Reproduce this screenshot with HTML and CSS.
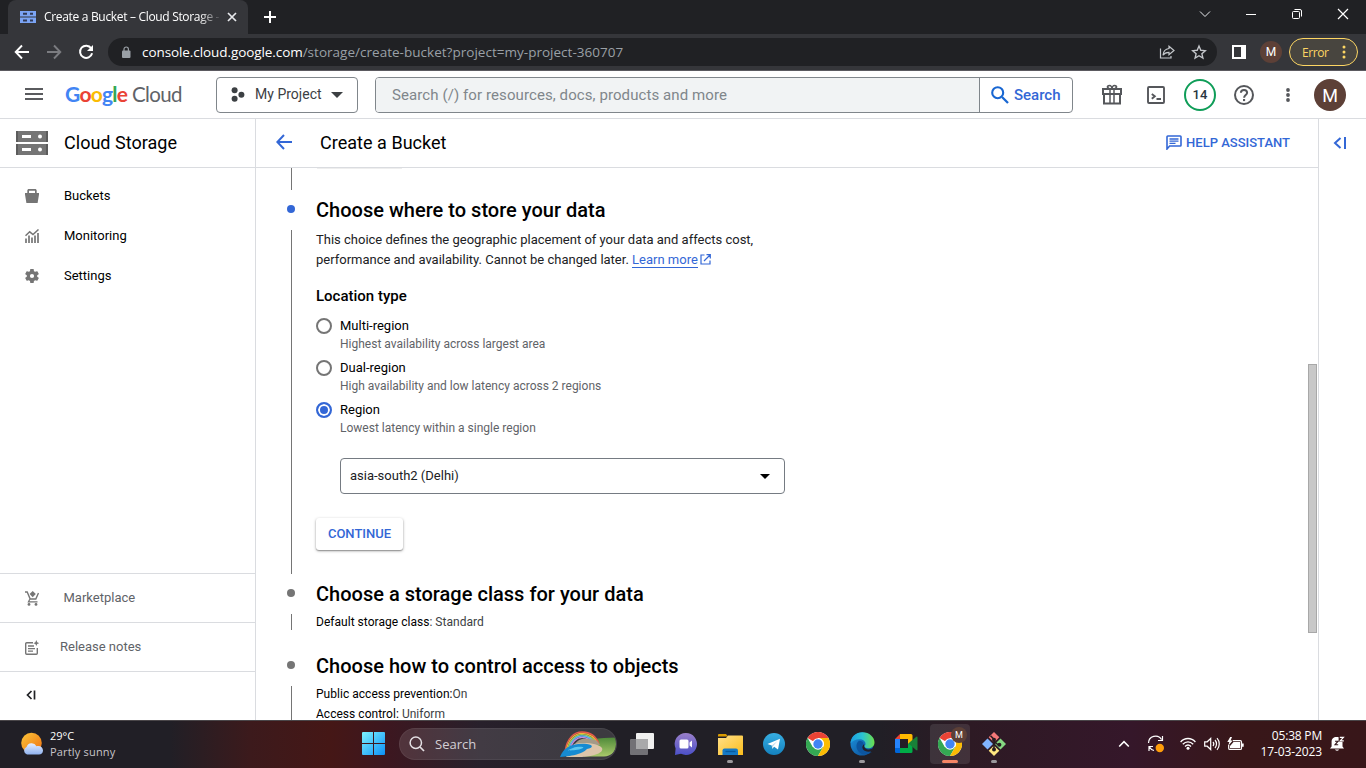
FILE: index.html
```html
<!DOCTYPE html>
<html lang="en">
<head>
<meta charset="utf-8">
<title>Create a Bucket – Cloud Storage</title>
<link rel="stylesheet" href="styles.css">
</head>
<body>
<svg class="defs" width="0" height="0" aria-hidden="true">
  <defs>
    <linearGradient id="win" x1="0" y1="0" x2="1" y2="1"><stop offset="0" stop-color="#7df3ff"/><stop offset="1" stop-color="#0c8ff5"/></linearGradient>
    <linearGradient id="sun" x1="0" y1="0" x2="1" y2="1"><stop offset="0" stop-color="#fcc63a"/><stop offset="1" stop-color="#ee6f10"/></linearGradient>
    <linearGradient id="cloud" x1="0" y1="0" x2="0" y2="1"><stop offset="0" stop-color="#e4edff"/><stop offset="1" stop-color="#8fb2f0"/></linearGradient>
    <linearGradient id="chat" x1="0" y1="0" x2="0" y2="1"><stop offset="0" stop-color="#9a7fc9"/><stop offset="1" stop-color="#4b50c8"/></linearGradient>
    <linearGradient id="folder" x1="0" y1="0" x2="1" y2="1"><stop offset="0" stop-color="#ffe08a"/><stop offset="1" stop-color="#fbbd1c"/></linearGradient>
    <linearGradient id="tele" x1="0" y1="0" x2="0" y2="1"><stop offset="0" stop-color="#37aee2"/><stop offset="1" stop-color="#1481be"/></linearGradient>
    <linearGradient id="edge" x1="0" y1="0" x2="1" y2="0"><stop offset="0" stop-color="#1b9de2"/><stop offset=".5" stop-color="#2bc3d2"/><stop offset="1" stop-color="#6be04b"/></linearGradient>
    <linearGradient id="edge2" x1="0" y1="0" x2="1" y2="1"><stop offset="0" stop-color="#1c93dd"/><stop offset="1" stop-color="#0b4a94"/></linearGradient>
    <linearGradient id="hill" x1="0" y1="0" x2="0" y2="1"><stop offset="0" stop-color="#4f8a3a"/><stop offset="1" stop-color="#a9c96a"/></linearGradient>
    <symbol id="chrome" viewBox="0 0 24 24">
      <circle cx="12" cy="12" r="12" fill="#fff"/>
      <path d="M12 12 1.600 6A12 12 0 0 1 22.400 6H12z" fill="#ea4335"/>
      <path d="M1.600 6A12 12 0 0 0 12 24l5.200-9L12 12l-5.200 3z" fill="#34a853"/>
      <path d="M22.400 6A12 12 0 0 1 12 24l5.200-9A6 6 0 0 0 12 6z" fill="#fbbc04"/>
      <circle cx="12" cy="12" r="5.800" fill="#fff"/><circle cx="12" cy="12" r="4.700" fill="#4285f4"/>
    </symbol>
  </defs>
</svg>

<div class="tabstrip">
  <div class="tab">
    <svg width="16" height="14" viewBox="0 0 16 14"><path fill="#7ba4f4" d="M0 1h16v5.400H0zM0 7.600h16V13H0z"/><path fill="#303a56" d="M3 2.800h4v2H3zM10 2.800h3v2h-3zM3 9.400h4v2H3zM10 9.400h3v2h-3z"/></svg>
    <span class="tab-title">Create a Bucket – Cloud Storage -</span>
    <svg class="tab-close" width="10" height="10" viewBox="0 0 10 10"><path d="M1 1l8 8M9 1L1 9" stroke="#e8eaed" stroke-width="1.700"/></svg>
  </div>
  <svg class="tab-plus" width="12" height="12" viewBox="0 0 12 12"><path d="M6 0v12M0 6h12" stroke="#fff" stroke-width="2"/></svg>
  <div class="win-controls">
    <span><svg width="12" height="12" viewBox="0 0 12 12"><path d="M1 3.500l5 5 5-5" stroke="#e8eaed" fill="none"/></svg></span>
    <span><svg width="10" height="12" viewBox="0 0 10 12"><path d="M0 6.500h10" stroke="#fff"/></svg></span>
    <span><svg width="10" height="10" viewBox="0 0 10 10"><path d="M2.500.5H8A1.500 1.500 0 0 1 9.500 2v5.500" stroke="#fff" fill="none"/><rect x=".5" y="2.500" width="7" height="7" rx="1" stroke="#fff" fill="none"/></svg></span>
    <span><svg width="12" height="12" viewBox="0 0 12 12"><path d="M1 1l10 10M11 1L1 11" stroke="#fff" stroke-width="1.200"/></svg></span>
  </div>
</div>

<div class="toolbar">
  <div class="nav-btns">
    <span><svg width="16" height="16" viewBox="0 0 16 16"><path d="M15 8H2M8 1.500L1.700 8 8 14.500" stroke="#fff" stroke-width="1.900" fill="none"/></svg></span>
    <span><svg width="16" height="16" viewBox="0 0 16 16"><path d="M1 8h13M8 1.500L14.300 8 8 14.500" stroke="#7b7c80" stroke-width="1.900" fill="none"/></svg></span>
    <span><svg width="16" height="16" viewBox="0 0 16 16"><path d="M13.200 4.300A6.100 6.100 0 1 0 14.100 9.200" stroke="#fff" stroke-width="2" fill="none"/><path d="M15 1v6H9z" fill="#fff"/></svg></span>
  </div>
  <div class="omnibox">
    <svg class="lock" width="10" height="12" viewBox="0 0 10 12"><rect x="1" y="4.500" width="8.500" height="7.500" rx="1" fill="#9aa0a6"/><path d="M3 5V3.200a2.200 2.200 0 0 1 4.400 0V5" stroke="#9aa0a6" stroke-width="1.200" fill="none"/></svg>
    <span class="url"><b>console.cloud.google.com</b>/storage/create-bucket?project=my-project-360707</span>
    <svg class="share" width="16" height="16" viewBox="0 0 16 16"><path d="M1.500 4.500v9.500H12v-2" stroke="#c4c7cb" stroke-width="1.200" fill="none"/><path d="M10 2.200l5 4.300-5 4.300V8.400C7 8.400 5.200 9.300 4 11.200 4.300 7.500 6.200 5 10 4.500z" stroke="#c4c7cb" stroke-width="1.200" fill="none"/></svg>
    <svg width="16" height="16" viewBox="0 0 24 24"><path d="M12 3l2.700 6.400 6.800.6-5.200 4.500 1.600 6.700L12 17.600l-5.900 3.600 1.600-6.700L2.500 10l6.800-.6z" stroke="#c4c7cb" stroke-width="2" fill="none"/></svg>
  </div>
  <svg class="sidepanel" width="14" height="14" viewBox="0 0 14 14"><path fill="#fff" fill-rule="evenodd" d="M0 0h14v14H0zM2 2v10h7V2z"/></svg>
  <span class="profile">M</span>
  <div class="error"><span>Error</span><svg width="4" height="14" viewBox="0 0 4 14"><g fill="#fdd663"><circle cx="2" cy="2" r="1.500"/><circle cx="2" cy="7" r="1.500"/><circle cx="2" cy="12" r="1.500"/></g></svg></div>
</div>

<header class="gheader">
  <svg class="burger" width="18" height="12" viewBox="0 0 18 12"><path d="M0 1h18M0 6h18M0 11h18" stroke="#5a5b5e" stroke-width="2"/></svg>
  <div class="logo"><span class="google"><i class="c-b">G</i><i class="c-r">o</i><i class="c-y">o</i><i class="c-b">g</i><i class="c-g">l</i><i class="c-r">e</i></span><span class="cloud">Cloud</span></div>
  <div class="project">
    <svg width="14" height="16" viewBox="0 0 14 16"><g fill="#3c4043"><circle cx="3.600" cy="3.200" r="3"/><circle cx="10.400" cy="7.800" r="3"/><circle cx="3.600" cy="11.800" r="3"/></g></svg>
    <span>My Project</span>
    <svg class="caret" width="12" height="6" viewBox="0 0 12 6"><path d="M0 0h12L6 6z" fill="#3c4043"/></svg>
  </div>
  <div class="search">
    <span class="placeholder">Search (/) for resources, docs, products and more</span>
    <div class="search-btn"><svg width="18" height="18" viewBox="0 0 18 18"><circle cx="6.700" cy="6.700" r="5.500" stroke="#1967d2" stroke-width="2.100" fill="none"/><path d="M11 11l6 6" stroke="#1967d2" stroke-width="2.300"/></svg><span>Search</span></div>
  </div>
  <div class="tools">
    <span><svg width="22" height="24" viewBox="0 0 22 24"><g stroke="#55575b" stroke-width="2" fill="none"><path d="M2 6h18v5H2zM3 11h16v9.500H3z"/><path d="M9 6v14.500M13 6v14.500" stroke-width="1.500"/><path d="M11 6C5.500 6 5.500 2.500 8.500 2.500 10 2.500 11 4.500 11 5.500c0-1 1-3 2.500-3 3 0 3 3.500-2.500 3.500z" stroke-width="1.700"/></g></svg></span>
    <span><svg width="18" height="18" viewBox="0 0 18 18"><rect x="1" y="1" width="16" height="16" rx="1" stroke="#55575b" stroke-width="1.900" fill="none"/><path d="M4.800 8l3 2.300-3 2.500M9.500 13h4.500" stroke="#55575b" stroke-width="1.900" fill="none"/></svg></span>
    <span><b class="count">14</b></span>
    <span><svg width="20" height="20" viewBox="0 0 20 20"><circle cx="10" cy="10" r="9" stroke="#55575b" stroke-width="2" fill="none"/><path d="M6.900 7.800C6.900 6 8.200 4.900 10 4.900s3.100 1.200 3.100 2.800c0 2.300-3 2.500-3 5.100" stroke="#55575b" stroke-width="2" fill="none"/><rect x="9" y="14" width="2.100" height="2.100" fill="#55575b"/></svg></span>
    <span><svg width="4" height="14" viewBox="0 0 4 14"><g fill="#55575b"><circle cx="2" cy="2" r="1.900"/><circle cx="2" cy="7" r="1.900"/><circle cx="2" cy="12" r="1.900"/></g></svg></span>
  </div>
  <span class="avatar">M</span>
</header>

<div class="app">
  <nav class="sidebar">
    <div class="side-head">
      <svg width="32" height="24" viewBox="0 0 32 24"><path fill="#757575" d="M0 0h32v11H0zM0 13h32v11H0z"/><path fill="#5c5c5c" d="M0 0h2v11H0zM30 0h2v11h-2zM0 13h2v11H0zM30 13h2v11h-2z"/><path fill="#fff" d="M6 4h9v3H6zM6 17h9v3H6z"/><circle cx="24" cy="5.500" r="2" fill="#fff"/><circle cx="24" cy="18.500" r="2" fill="#fff"/></svg>
      <span>Cloud Storage</span>
    </div>
    <ul class="side-list">
      <li><svg width="14" height="14" viewBox="0 0 14 14"><path fill="#757575" fill-rule="evenodd" d="M0 4h2.300V1.800C2.300.6 3 0 4 0h6c1 0 1.700.6 1.700 1.800V4H14v1.600L12.600 14H1.400L0 5.600zM4 4h6V1.700H4z"/></svg><span>Buckets</span></li>
      <li><svg width="14" height="14" viewBox="0 0 14 14"><path d="M.5 6.800L4.700 2.800 8 5.500 13.500.5" stroke="#757575" stroke-width="1.500" fill="none"/><path d="M1 14V9.500M4 14V6.500M7 14V8.500M10 14V6.500M13 14V4" stroke="#757575" stroke-width="1.700"/></svg><span>Monitoring</span></li>
      <li><svg width="14" height="14" viewBox="2 2 20 20"><path fill="#757575" d="M19.400 13a7.500 7.500 0 0 0 0-2l2.100-1.600c.2-.1.200-.4.100-.6l-2-3.500c-.1-.2-.4-.3-.6-.2l-2.500 1a7 7 0 0 0-1.700-1l-.4-2.600c0-.3-.2-.5-.5-.5h-4c-.2 0-.4.200-.4.500l-.4 2.600a7 7 0 0 0-1.700 1L5 5.100c-.2-.1-.5 0-.6.200l-2 3.500c-.1.200-.1.500.1.600L4.600 11a7.500 7.500 0 0 0 0 2l-2.100 1.600c-.2.100-.2.400-.1.600l2 3.500c.1.200.4.300.6.200l2.400-1a7 7 0 0 0 1.700 1l.4 2.600c0 .3.200.5.400.5h4c.3 0 .5-.2.500-.5l.4-2.600a7 7 0 0 0 1.700-1l2.500 1c.2.100.5 0 .6-.2l2-3.500c.1-.2.100-.5-.1-.6zM12 15a3 3 0 1 1 0-6 3 3 0 0 1 0 6z"/></svg><span>Settings</span></li>
    </ul>
    <div class="side-foot">
      <div class="foot-row market"><svg width="14" height="15" viewBox="0 0 14 15"><path d="M0 1h2.200l3 7h5.600L13.500 2" stroke="#757575" stroke-width="1.400" fill="none"/><path d="M4.800 8.300L3.500 10.800H12.500" stroke="#757575" stroke-width="1.300" fill="none"/><path d="M7.700 0l3.100 3.100-3.100 3.100-3.100-3.100z" fill="#757575"/><circle cx="4" cy="13.400" r="1.400" fill="#757575"/><circle cx="11" cy="13.400" r="1.400" fill="#757575"/></svg><span>Marketplace</span></div>
      <div class="foot-row notes"><svg width="14" height="15" viewBox="0 0 14 15"><path d="M8 2.700H1.700a1 1 0 0 0-1 1v9.600a1 1 0 0 0 1 1h9.600a1 1 0 0 0 1-1V8" stroke="#757575" stroke-width="1.400" fill="none"/><path d="M3 6h6M3 8.600h7M3 11.200h5" stroke="#757575" stroke-width="1.300"/><path d="M11.300 0l.9 2.300 2 .9-2 .9-.9 2-.9-2-2-.9 2-.9z" fill="#757575"/></svg><span>Release notes</span></div>
      <div class="foot-row"><svg class="fold" width="10" height="10" viewBox="0 0 10 10"><path d="M5.500 1L1.500 5l4 4M8.500.5v9" stroke="#202124" stroke-width="1.700" fill="none"/></svg></div>
    </div>
  </nav>

  <main class="main">
    <div class="main-head">
      <svg width="16" height="16" viewBox="0 0 16 16"><path d="M16 8H1.800M8 1L1.300 8 8 15" stroke="#3367d6" stroke-width="2" fill="none"/></svg>
      <h1>Create a Bucket</h1>
      <div class="help"><svg width="16" height="15" viewBox="0 0 16 15"><path d="M1 14V1.800Q1 1 1.800 1H14.200Q15 1 15 1.800V10.200Q15 11 14.200 11H3.600z" stroke="#3367d6" stroke-width="1.600" fill="none"/><path d="M3.500 4h9M3.500 6.200h9M3.500 8.400h6" stroke="#3367d6" stroke-width="1.300"/></svg><span>HELP ASSISTANT</span></div>
    </div>
    <div class="content">
      <div class="steps">
        <div class="prev"><div class="rail-line"></div><div class="prev-shadow"></div></div>

        <section class="step first">
          <div class="rail"><div class="dot-box"><i class="dot active"></i></div><div class="rail-line"></div></div>
          <div class="body">
            <h2>Choose where to store your data</h2>
            <p class="desc"><span class="l1">This choice defines the geographic placement of your data and affects cost,</span><br><span class="l2">performance and availability. Cannot be changed later. <a>Learn more</a></span><svg class="ext" width="11" height="11" viewBox="0 0 11 11"><path d="M4.500 1H1v9h9V6.500M6.500.700h3.800v3.800M10 1L4 7" stroke="#3367d6" stroke-width="1.200" fill="none"/></svg></p>
            <h3>Location type</h3>
            <div class="option"><i class="radio"></i><div><b>Multi-region</b><small>Highest availability across largest area</small></div></div>
            <div class="option"><i class="radio"></i><div><b>Dual-region</b><small>High availability and low latency across 2 regions</small></div></div>
            <div class="option"><i class="radio on"></i><div><b>Region</b><small>Lowest latency within a single region</small></div></div>
            <div class="select"><span>asia-south2 (Delhi)</span><svg width="10" height="5" viewBox="0 0 10 5"><path d="M0 0h10L5 5z" fill="#000"/></svg></div>
            <button class="continue">CONTINUE</button>
          </div>
        </section>

        <section class="step second">
          <div class="rail"><div class="dot-box"><i class="dot"></i></div><div class="rail-line"></div></div>
          <div class="body">
            <h2>Choose a storage class for your data</h2>
            <div class="fact"><b>Default storage class</b>: Standard</div>
          </div>
        </section>

        <section class="step third">
          <div class="rail"><div class="dot-box"><i class="dot"></i></div><div class="rail-line"></div></div>
          <div class="body">
            <h2>Choose how to control access to objects</h2>
            <div class="fact tall"><b>Public access prevention:</b>On</div>
            <div class="fact tall"><b>Access control:</b> Uniform</div>
          </div>
        </section>
      </div>
      <div class="scroll"><div class="thumb"></div></div>
    </div>
  </main>
  <aside class="panel"><svg width="14" height="12" viewBox="0 0 14 12"><path d="M7.500 1L2 6l5.500 5M12 0v12" stroke="#3367d6" stroke-width="2" fill="none"/></svg></aside>
</div>

<footer class="taskbar">
  <div class="weather">
    <svg width="23" height="24" viewBox="0 0 23 24"><circle cx="10.500" cy="11" r="10.300" fill="url(#sun)"/><path d="M6 22.500a4 4 0 0 1-.5-7.500 5.500 5.500 0 0 1 10-.8c3.500-1 6.500 1 6.500 4.300 0 2.500-1.800 4-4 4z" fill="url(#cloud)"/></svg>
    <div><span class="temp">29°C</span><span class="cond">Partly sunny</span></div>
  </div>
  <div class="start"><svg width="23" height="23" viewBox="0 0 23 23"><path fill="url(#win)" d="M1 0H11V11H0V1Q0 0 1 0ZM12 0H22Q23 0 23 1V11H12ZM0 12H11V23H1Q0 23 0 22ZM12 12H23V22Q23 23 22 23H12Z"/></svg></div>
  <div class="tb-search">
    <svg width="16" height="16" viewBox="0 0 16 16"><circle cx="6.800" cy="6.800" r="5.700" stroke="#e4e0e4" stroke-width="1.500" fill="none"/><path d="M11 11l4 4" stroke="#e4e0e4" stroke-width="1.700"/></svg>
    <span>Search</span>
    <svg class="scene" width="57" height="27" viewBox="0 0 57 27"><path d="M28 7.500c10 .5 18-1 28-1v7c0 7-5 12-12 12H24z" fill="url(#hill)"/><g fill="none" stroke-width="1.300"><path d="M5 20C7 7 14 1 22 1s14 4 17 12" stroke="#e8574c"/><path d="M6.200 20C8 8 15 2.300 22 2.300s13 4 16 11" stroke="#f5b13a"/><path d="M7.500 20C9 9 16 3.600 22 3.600s12 4 15 10" stroke="#9bd35a"/><path d="M8.800 20C10 10 16 5 22 5s11 4 14 9" stroke="#5cb4f0"/><path d="M10 20C11 11 17 6.300 22 6.300s10 4 13 8" stroke="#c58be0"/></g><path d="M15 13c3-5 8-6 14-5 6 0 9 2 11 6z" fill="#a39a88"/><path d="M14 13c10-2 24-1 28 4 2 5-8 8-20 9H6z" fill="#dcc5aa"/><path d="M0 26C4 16 12 12 27 13c7 1 6 4 0 5-3 3-6 4-9 5-6 2-10 2-18 3z" fill="#168bd2"/><path d="M13 17c5-2 12-1 10 0-3 2-14 3-15 2z" fill="#5cc7ef"/></svg>
  </div>
  <div class="apps">
    <span><svg width="24" height="22" viewBox="0 0 24 22"><rect x="6" y="0" width="18" height="16" rx="1" fill="#f0f0f0"/><rect x="0" y="6" width="18" height="16" rx="1" fill="#727176"/><path d="M6 6h12v10H6z" fill="#a9a9ab"/></svg></span>
    <span><svg width="24" height="24" viewBox="0 0 24 24"><path d="M12 1a11 11 0 1 1-5 20.800L1 23l.6-6.500A11 11 0 0 1 12 1z" fill="url(#chat)"/><rect x="5.500" y="7.500" width="9" height="9" rx="1.500" fill="#fff"/><path d="M15.500 10.500l2.500-2v7l-2.500-2z" fill="#fff"/></svg></span>
    <span class="running"><svg width="25" height="24" viewBox="0 0 25 24"><path d="M0 3a1 1 0 0 1 1-1h7l2 2.500H0z" fill="#d99a00"/><path d="M0 6h8l2-2.500h14a1 1 0 0 1 1 1V23H0z" fill="url(#folder)"/><path d="M4.500 23v-4.500a2 2 0 0 1 2-2H18a2 2 0 0 1 2 2V23z" fill="#1579c5"/><path d="M7.500 19.500h10" stroke="#075a9e" stroke-width="1.300"/></svg></span>
    <span><svg width="22" height="22" viewBox="0 0 22 22"><circle cx="11" cy="11" r="11" fill="url(#tele)"/><path d="M4.500 11L17 5.800 15 16.500l-3.800-2.800-2 2-.4-3.300z" fill="#fff"/><path d="M8.800 12.400L14.500 8l-4.300 5-.9 2.700z" fill="#b9d9ec"/></svg></span>
    <span><svg width="24" height="24"><use href="#chrome"/></svg></span>
    <span class="running"><svg width="25" height="24" viewBox="0 0 25 24"><circle cx="12" cy="12" r="11.500" fill="url(#edge2)"/><path d="M.5 11.500C1 4.500 6 .3 12.500.3c7 0 12 5 12 10 0 4-3 6-6.500 6-2 0-3.500-.7-3.500-1.700 0-.6 1-1.200 1-2.800 0-2.500-2.700-4.500-6-4.500-4 0-7.500 1.800-9 4.200z" fill="url(#edge)"/><path d="M9 8.800C6 11 5.500 16 8.500 19.500c3 3.500 9 4 13.500.5-4 1.500-8 0-9.500-3-1.200-2.500-.2-4 1-5.200 0-2-2-3-4.500-3z" fill="#0c559f"/><path d="M14.400 12c-1.200 2.300.6 5 3.600 5.400 2.500.3 4.500-.7 6-1.800l-1.400 3.200c-4 1.800-8.100 1-9.900-1.800-1-2.200-.1-4.200 1.700-5z" fill="#22202a"/></svg></span>
    <span><svg width="23" height="19" viewBox="0 0 23 19"><path d="M0 5h5v9H0z" fill="#2684fc"/><path d="M0 14h5v5H1.500Q0 19 0 17.500z" fill="#0066da"/><path d="M0 5l5-5v5z" fill="#ea4335"/><path d="M5 0h11q1.500 0 1.500 1.500V9L13 10V5H5z" fill="#ffba00"/><path d="M5 19v-5h8V10l4.500-4v11.500Q17.500 19 16 19z" fill="#00ac47"/><path d="M13.500 9.500L21 3q1.500-1 1.500.5v12q0 1.500-1.500.5z" fill="#188038"/></svg></span>
    <span class="current"><svg width="24" height="24"><use href="#chrome"/></svg><em>M</em></span>
    <span class="running"><svg width="24" height="24" viewBox="0 0 24 24"><path d="M12 0l5.300 5.300L12 10.600 6.700 5.300z" fill="#f57878"/><path d="M5.500 6.500l5.500 5.500-5.500 5.500L0 12z" fill="#80b3ff"/><path d="M18.500 6.500L24 12l-5.500 5.500L13 12z" fill="#85d982"/><path d="M12 13.400l5.300 5.300L12 24l-5.300-5.300z" fill="#ffe680"/><path d="M8.500 3.800L12 7.300v10M12 9.500l5 4" stroke="#251d21" stroke-width="1.600" fill="none"/><g fill="#251d21"><circle cx="12" cy="7.800" r="2"/><circle cx="12" cy="17.500" r="2"/><circle cx="17.400" cy="12.800" r="2"/></g></svg></span>
  </div>
  <div class="tray">
    <svg class="t-up" width="12" height="8" viewBox="0 0 12 8"><path d="M1.200 6.500L6 1.700l4.800 4.800" stroke="#fff" stroke-width="1.600" fill="none"/></svg>
    <svg class="t-sync" width="18" height="18" viewBox="0 0 18 18"><path d="M1.500 8A7 7 0 0 1 14.500 4.500M15.500 1v4.500H11M2 16v-4.500h4M2.500 12c1 2 2.500 3 4.500 3.500" stroke="#fff" stroke-width="1.200" fill="none"/><circle cx="12.800" cy="13" r="4.200" fill="#ff9d0a"/></svg>
    <svg class="t-wifi" width="16" height="13" viewBox="0 0 16 13"><g stroke="#fff" stroke-width="1.300" fill="none"><path d="M.6 5C4.700.3 11.300.3 15.400 5M2.800 7.300c3-3.200 7.400-3.200 10.400 0M5 9.500c1.800-1.800 4.200-1.800 6 0"/></g><circle cx="8" cy="11.200" r="1.500" fill="#fff"/></svg>
    <svg class="t-vol" width="16" height="14" viewBox="0 0 16 14"><g stroke="#fff" stroke-width="1.200" fill="none"><path d="M.700 4.800h2.500L6.700 1.500v11L3.200 9.200H.700zM9 5c1 1.200 1 2.800 0 4M11 3c2 2.200 2 5.800 0 8M13 1.200c3 3.200 3 8.400 0 11.600"/></g></svg>
    <svg class="t-bat" width="17" height="14" viewBox="0 0 17 14"><path d="M6 3.700h7.200q1.300 0 1.300 1.300v6.200q0 1.300-1.300 1.300H3q-1.300 0-1.300-1.300V8" stroke="#fff" stroke-width="1.200" fill="none"/><path d="M6.500 5H13.200v6.200H3V9zM15 6.500h1.700v3.200H15zM3.200 0L.3 5h2L1.200 8.800 5.800 3.500H3.600L5 0z" fill="#fff"/></svg>
    <div class="clock"><span>05:38 PM</span><span class="date">17-03-2023</span></div>
    <svg class="t-bell" width="15" height="16" viewBox="0 0 15 16"><path d="M1.600 6C1.600 2.500 3.500 1 6.500 1h2l4 5v4.500l1.500 2H0l1.600-2zM4.800 13.500h4.400q-2 2.600-4.400 0z" fill="#fff"/><path d="M5 5.200h3L5 8.800h3.200" stroke="#35181c" stroke-width="1.100" fill="none"/><path d="M8.600.5h6v5.300h-6z" fill="#381719"/><path d="M9.800 1.300h3.600l-3.200 3.500h3.600" stroke="#fff" stroke-width="1.200" fill="none"/></svg>
  </div>
</footer>
</body>
</html>
```
FILE: styles.css
```css
* { box-sizing: border-box; margin: 0; padding: 0; }
html, body { width: 1366px; height: 768px; overflow: hidden; }
body { display: flex; flex-direction: column; background: #fff; font-family: Roboto, sans-serif; font-size: 13px; color: #202124; }
svg { display: block; flex: none; }
i, em { font-style: normal; }
span { white-space: nowrap; }
.defs { position: absolute; }

/* browser chrome */
.tabstrip { display: flex; align-items: center; height: 34px; flex: none; background: #202124; padding-left: 8px; font-family: "Open Sans", sans-serif; }
.tab { display: flex; align-items: center; width: 240px; height: 34px; background: #35363a; border-radius: 8px 8px 0 0; padding: 0 11px 0 12px; }
.tab-title { width: 180px; margin-left: 8px; color: #fff; font-size: 12px; letter-spacing: -.32px; line-height: 20px; -webkit-mask-image: linear-gradient(90deg, #000 86%, transparent 99%); mask-image: linear-gradient(90deg, #000 86%, transparent 99%); }
.tab-close { margin-left: auto; }
.tab-plus { margin-left: 16px; }
.win-controls { display: flex; align-self: flex-start; margin-left: auto; height: 28px; }
.win-controls span { width: 46px; display: flex; align-items: center; justify-content: center; }
.toolbar { display: flex; align-items: center; height: 37px; flex: none; background: #35363a; border-bottom: 1px solid #5b5a60; padding-left: 6px; font-family: "Open Sans", sans-serif; }
.nav-btns { display: flex; width: 102px; }
.nav-btns span { width: 32px; display: flex; justify-content: center; }
.omnibox { display: flex; align-items: center; width: 1109px; height: 28px; background: #202124; border-radius: 14px; padding: 0 10px 0 13px; }
.url { margin-left: 11px; font-size: 13.500px; color: #9aa0a6; letter-spacing: .02px; }
.url b { font-weight: 400; color: #fff; letter-spacing: -.08px; }
.share { margin-left: auto; margin-right: 16px; }
.sidepanel { margin-left: 15px; }
.profile { width: 22px; height: 22px; margin-left: 14px; border-radius: 50%; background: #5d4037; color: #fff; font: 12px/22px Roboto, sans-serif; text-align: center; }
.error { display: flex; align-items: center; justify-content: space-between; width: 69px; height: 28px; margin-left: 7px; padding: 0 11px 0 12px; border: 1px solid #fdd663; border-radius: 14px; background: #48453f; color: #fdd663; font-size: 12px; letter-spacing: -.4px; }

/* console header */
.gheader { display: flex; align-items: center; height: 48px; flex: none; border-bottom: 1px solid #dadce0; padding-left: 25px; }
.burger { margin-bottom: 1px; }
.logo { display: flex; align-items: center; width: 151px; margin-left: 22px; padding-bottom: 2px; font-family: Lato, sans-serif; font-size: 21px; line-height: 26px; }
.google { width: 67px; font-weight: 700; letter-spacing: -.75px; }
.cloud { color: #5f6368; font-size: 20.500px; letter-spacing: -.65px; }
.c-b { color: #4285f4; } .c-r { color: #ea4335; } .c-y { color: #fbbc04; } .c-g { color: #34a853; }
.project { display: flex; align-items: center; width: 142px; height: 36px; border: 1px solid #80868b; border-radius: 4px; padding-left: 14px; color: #3c4043; font-size: 14px; }
.project span { width: 66px; margin-left: 10px; padding-bottom: 1px; letter-spacing: .02px; }
.caret { margin-left: 10px; }
.search { display: flex; width: 698px; height: 36px; margin-left: 17px; border: 1px solid #80868b; border-radius: 4px; overflow: hidden; }
.placeholder { width: 604px; background: #f1f3f4; border-right: 1px solid #80868b; padding-left: 16px; color: #80868b; font-size: 15px; line-height: 34px; letter-spacing: .09px; }
.search-btn { display: flex; align-items: center; gap: 5px; padding-left: 11px; color: #3367d6; font-size: 15px; font-weight: 500; }
.tools { display: flex; width: 220px; margin-left: 17px; }
.tools span { display: flex; align-items: center; justify-content: center; width: 44px; height: 32px; }
.count { width: 32px; height: 32px; border: 2px solid #0f9d58; border-radius: 50%; text-align: center; font: 500 13px/28px Roboto, sans-serif; color: #28343f; }
.avatar { width: 32px; height: 32px; margin-left: 4px; border-radius: 50%; background: #5d4037; color: #fff; font-size: 18px; line-height: 33px; text-align: center; }

/* app layout */
.app { display: flex; height: 601px; flex: none; }
.sidebar { display: flex; flex-direction: column; width: 256px; border-right: 1px solid #dadce0; }
.side-head { display: flex; align-items: center; height: 49px; padding-left: 16px; border-bottom: 1px solid #dadce0; color: #000; font-size: 18px; letter-spacing: .02px; }
.side-head span { margin-left: 16px; padding-bottom: 2px; }
.side-list { list-style: none; padding-top: 8px; }
.side-list li { display: flex; align-items: center; height: 40px; padding-left: 25px; gap: 25px; color: #000; }
.side-list span, .foot-row span, .select span { padding-bottom: 2px; }
.side-foot { margin-top: auto; }
.foot-row { display: flex; align-items: center; height: 49px; border-top: 1px solid #dadce0; padding-left: 25px; color: #5f6368; }
.market { gap: 24.500px; }
.notes { gap: 21px; }
.fold { margin: 0 0 2px 1px; }
.main { width: 1062px; }
.main-head { display: flex; align-items: center; height: 49px; border-bottom: 1px solid #dadce0; padding: 0 28px 2px 20px; }
.main-head h1 { margin-left: 28px; font-size: 18px; font-weight: 400; color: #000; letter-spacing: .03px; }
.help { display: flex; align-items: center; gap: 4px; margin-left: auto; color: #3367d6; font-size: 13px; font-weight: 500; }
.panel { flex: 1; border-left: 1px solid #dadce0; padding: 18px 0 0 14px; }
.content { display: flex; justify-content: space-between; height: 552px; overflow: hidden; }
.scroll { width: 10px; padding-top: 196px; }
.thumb { width: 9px; height: 269px; background: #c8c8c8; border: 1px solid #a8a8a8; }

/* stepper */
.steps { padding-left: 27px; }
.prev { display: flex; height: 22px; }
.rail-line { width: 1px; background: #757575; margin-left: 8px; flex: none; }
.prev-shadow { width: 85px; height: 1px; margin-left: 25px; background: #eee; }
.step { display: flex; }
.rail { display: flex; flex-direction: column; width: 33px; }
.rail .rail-line { flex: 1; }
.dot-box { display: flex; align-items: center; height: 40px; padding: 0 0 2px 4px; }
.dot { width: 8px; height: 8px; border-radius: 50%; background: #757575; }
.dot.active { background: #3367d6; }
.first { height: 384px; }
.second { height: 56px; margin-bottom: 16px; }
.third { height: 90px; }
.body h2 { font-size: 20px; font-weight: 500; line-height: 40px; color: #000; white-space: nowrap; letter-spacing: .015px; }
.desc { height: 40px; line-height: 20px; color: #202124; white-space: nowrap; }
.desc a { color: #3367d6; border-bottom: 1px solid #3367d6; }
.ext { display: inline-block; margin-left: 2px; vertical-align: -1px; }
.body h3 { margin: 16px 0 10px; font-size: 15px; line-height: 20px; font-weight: 500; color: #000; }
.option { display: flex; gap: 8px; height: 42px; }
.radio { width: 16px; height: 16px; margin-top: 2px; border: 2px solid #757575; border-radius: 50%; }
.radio.on { border-color: #3367d6; background: #3367d6; box-shadow: inset 0 0 0 2px #fff; }
.option b { display: block; font-weight: 400; color: #000; line-height: 20px; }
.option small { display: block; font-size: 12px; line-height: 16px; color: #5f6368; }
.select { display: flex; align-items: center; justify-content: space-between; width: 445px; height: 36px; margin: 16px 0 0 24px; padding: 0 14px 0 9px; border: 1px solid #757b82; border-radius: 4px; }
.continue { display: block; width: 87px; height: 32px; margin-top: 24px; border: 0; border-radius: 3px; background: #fff; box-shadow: 0 1px 3px rgba(0,0,0,.35), 0 1px 1px rgba(0,0,0,.22); font: 500 13px/32px Roboto, sans-serif; color: #3367d6; }
.fact { font-size: 12px; line-height: 16px; color: #3c4043; white-space: nowrap; letter-spacing: .03px; }
.fact b { font-weight: 400; color: #000; }
.fact.tall { height: 20px; }

/* taskbar */
.taskbar { display: flex; align-items: center; height: 48px; flex: none; padding-bottom: 1px; box-shadow: inset 0 1px #4a4649; font-family: "Open Sans", sans-serif; color: #fff;
  background: linear-gradient(90deg, #211f26 0, #211f26 170px, #3c1a1c 250px, #451716 330px, #3c1720 390px, #28202b 480px, #211f26 600px, #211f26 880px, #2d1a24 970px, #35172a 1130px, #381719 1240px, #381619 1366px); }
.weather { display: flex; align-items: center; width: 362px; padding-left: 21px; font-size: 11px; line-height: 15.500px; }
.weather div { margin-left: 6px; }
.weather div span { display: block; }
.cond { color: #c8c5c9; letter-spacing: .18px; }
.tb-search { display: flex; align-items: center; width: 218px; height: 32px; margin-left: 14px; padding-left: 9px; border-radius: 16px; border: 1px solid rgba(255,255,255,.06); background: rgba(255,255,255,.12); color: #d3cfd4; font-size: 13px; overflow: hidden; }
.tb-search span { margin-left: 10px; }
.scene { margin: 2px -1px 0 auto; }
.apps { display: flex; margin-left: 3px; }
.apps span { position: relative; display: flex; align-items: center; justify-content: center; width: 44px; height: 40px; }
.running::after { content: ""; position: absolute; left: 19px; bottom: 1px; width: 6px; height: 3px; border-radius: 2px; background: #9b999d; }
.current::before { content: ""; position: absolute; left: 2px; top: 0; width: 40px; height: 40px; border-radius: 4px; background: rgba(255,255,255,.1); }
.current::after { content: ""; position: absolute; left: 14px; bottom: 1px; width: 16px; height: 3px; border-radius: 2px; background: #f58565; }
.current svg { position: relative; }
.current em { position: absolute; left: 23px; top: 3px; width: 16px; height: 16px; border-radius: 50%; background: #5d4037; font: 9px/16px Roboto, sans-serif; text-align: center; }
.tray { display: flex; align-items: center; flex: 1; padding-left: 102px; }
.t-sync { margin-left: 17px; }
.t-wifi { margin-left: 15px; }
.t-vol { margin-left: 8px; }
.t-bat { margin-left: 7px; }
.clock { width: 78px; text-align: right; font-size: 12px; line-height: 16px; letter-spacing: -.2px; }
.clock span { display: block; }
.clock .date { letter-spacing: -.1px; }
.t-bell { margin-left: 8px; }
```
